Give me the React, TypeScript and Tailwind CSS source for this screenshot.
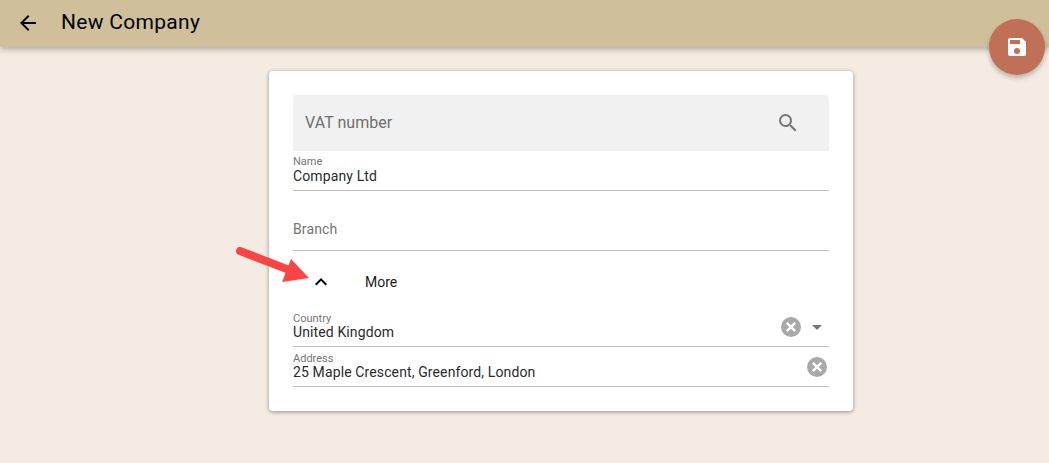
export default function App() {
  return (
    <div className="relative h-[463px] w-[1049px] overflow-hidden bg-[#f4ece2] font-['Roboto',sans-serif]">
      <header className="flex h-[47px] items-center bg-[#cfc09b] pb-[3px] pl-[16px] shadow-[0_2px_6px_rgba(0,0,0,0.3)]">
        <svg width="24" height="24" viewBox="0 0 24 24" className="mt-[1px] text-black" fill="currentColor">
          <path d="M20 11H7.83l5.59-5.59L12 4l-8 8 8 8 1.41-1.41L7.83 13H20v-2z" />
        </svg>
        <h1 className="ml-[21px] text-[21px] font-normal leading-none tracking-[0.3px] text-black">New Company</h1>
      </header>

      <button className="absolute left-[989px] top-[19px] flex h-[56px] w-[56px] items-center justify-center rounded-full bg-[#c07057] shadow-[0_3px_5px_rgba(0,0,0,0.25)]">
        <svg width="24" height="24" viewBox="0 0 24 24" fill="#fff" className="-mt-[1px]">
          <path d="M17 3H5a2 2 0 0 0-2 2v14a2 2 0 0 0 2 2h14a2 2 0 0 0 2-2V7l-4-4zm-5 16a3 3 0 1 1 0-6 3 3 0 0 1 0 6zm3-10H5V5h10v4z" />
        </svg>
      </button>

      <main className="ml-[269px] mt-[24px] h-[340px] w-[584px] rounded-[4px] bg-white px-[24px] pt-[24px] shadow-[0_1px_4px_rgba(0,0,0,0.4)]">
        <div className="flex h-[56px] items-center justify-between rounded-t-[4px] bg-[#f1f1f1] pl-[12px] pr-[29px]">
          <span className="text-[16px] tracking-[0.05px] text-[#6f6f6f]">VAT number</span>
          <svg width="24" height="24" viewBox="0 0 24 24" fill="#757575">
            <path d="M15.5 14h-.79l-.28-.27A6.47 6.47 0 0 0 16 9.5 6.5 6.5 0 1 0 9.5 16c1.61 0 3.09-.59 4.23-1.57l.27.28v.79l5 4.99L20.49 19l-4.99-5zm-6 0C7.01 14 5 11.99 5 9.5S7.01 5 9.5 5 14 7.01 14 9.5 11.99 14 9.5 14z" />
          </svg>
        </div>

        <div className="h-[40px] border-b border-[#bdbdbd] pt-[5px]">
          <div className="text-[11px] leading-[12px] text-[#757575]">Name</div>
          <div className="text-[14px] leading-[16px] tracking-[0.12px] text-[#2b2b2b]">Company Ltd</div>
        </div>

        <div className="flex h-[60px] items-center border-b border-[#bdbdbd] pt-[17px]">
          <span className="text-[14px] tracking-[0.12px] text-[#757575]">Branch</span>
        </div>

        <div className="flex h-[56px] items-center pt-[6px]">
          <svg width="24" height="24" viewBox="0 0 24 24" fill="#000" className="ml-[16px]">
            <path d="M7.41 15.41 12 10.83l4.59 4.58L18 14l-6-6-6 6z" />
          </svg>
          <span className="ml-[32px] text-[14px] text-[#1c1c1c]">More</span>
        </div>

        <div className="flex h-[40px] items-center border-b border-[#bdbdbd]">
          <div className="flex-1">
            <div className="text-[11px] leading-[12px] text-[#757575]">Country</div>
            <div className="-mt-[1px] text-[14px] leading-[16px] tracking-[0.12px] text-[#2b2b2b]">United Kingdom</div>
          </div>
          <span className="mr-[4px]"><ClearIcon /></span>
          <svg width="24" height="24" viewBox="0 0 24 24" fill="#757575">
            <path d="m7 10 5 5 5-5z" />
          </svg>
        </div>

        <div className="flex h-[40px] items-center border-b border-[#bdbdbd]">
          <div className="flex-1">
            <div className="text-[11px] leading-[12px] text-[#757575]">Address</div>
            <div className="-mt-[1px] text-[14px] leading-[16px] tracking-[0.12px] text-[#2b2b2b]">25 Maple Crescent, Greenford, London</div>
          </div>
          <span className="mr-[2px]"><ClearIcon /></span>
        </div>
      </main>

      <svg className="absolute left-[232px] top-[244px]" width="84" height="44" viewBox="0 0 84 44">
        <path d="M8 7 L60 27" stroke="#fb4545" strokeWidth="8" strokeLinecap="round" fill="none" />
        <path d="M59 15 L77 34 L50 38 Z" fill="#fb4545" />
      </svg>
    </div>
  );
}

function ClearIcon() {
  return (
    <svg width="20" height="20" viewBox="0 0 20 20" className="block">
      <circle cx="10" cy="10" r="10" fill="#a9a9a9" />
      <path d="M5.8 5.8 14.2 14.2 M14.2 5.8 5.8 14.2" stroke="#fff" strokeWidth="2.4" />
    </svg>
  );
}
